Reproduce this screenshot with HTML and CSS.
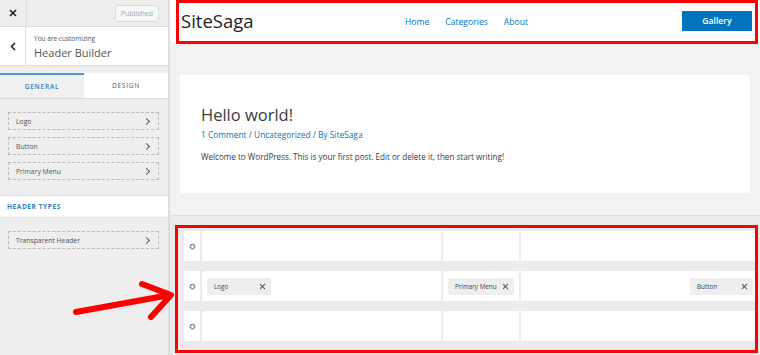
FILE: index.html
```html
<!DOCTYPE html>
<html lang="en">
<head>
  <title>Header Builder</title>
  <link rel="stylesheet" href="styles.css">
</head>
<body>
  <div id="app">
    <div class="sidebar">
      <div class="topbar">
        <div class="close">
          <svg width="8" height="8" viewBox="0 0 8 8"><path d="M1 1L7 7M7 1L1 7" stroke="#222" stroke-width="1.6"/></svg>
        </div>
        <div class="published">Published</div>
      </div>

      <div class="customizing">
        <div class="back">
          <svg width="6" height="9" viewBox="0 0 6 9"><path d="M5 1L1.5 4.5L5 8" fill="none" stroke="#222" stroke-width="1.6"/></svg>
        </div>
        <div class="title-wrap">
          <div class="small-title">You are customizing</div>
          <div class="big-title">Header Builder</div>
        </div>
      </div>

      <div class="tabs">
        <div class="tab active">General</div>
        <div class="tab">Design</div>
      </div>

      <div class="items">
        <div class="item">Logo <span class="chev"></span></div>
        <div class="item">Button <span class="chev"></span></div>
        <div class="item">Primary Menu <span class="chev"></span></div>
      </div>

      <div class="section-title">Header Types</div>

      <div class="items">
        <div class="item">Transparent Header <span class="chev"></span></div>
      </div>
    </div>

    <div class="preview">
      <div class="site-header">
        <div class="site-title">SiteSaga</div>
        <nav class="site-nav">
          <a>Home</a>
          <a>Categories</a>
          <a>About</a>
        </nav>
        <div class="gallery-btn">Gallery</div>
      </div>

      <div class="main">
        <div class="post">
          <h1>Hello world!</h1>
          <div class="meta">1 Comment / Uncategorized / By SiteSaga</div>
          <p>Welcome to WordPress. This is your first post. Edit or delete it, then start writing!</p>
        </div>
      </div>

      <div class="builder">
        <div class="row">
          <div class="gear"><span class="cog"></span></div>
          <div class="cell"></div>
          <div class="cell"></div>
          <div class="cell"></div>
        </div>
        <div class="row">
          <div class="gear"><span class="cog"></span></div>
          <div class="cell"><div class="chip">Logo <span class="x"></span></div></div>
          <div class="cell"><div class="chip">Primary Menu <span class="x"></span></div></div>
          <div class="cell right"><div class="chip">Button <span class="x"></span></div></div>
        </div>
        <div class="row">
          <div class="gear"><span class="cog"></span></div>
          <div class="cell"></div>
          <div class="cell"></div>
          <div class="cell"></div>
        </div>
      </div>
    </div>

    <!-- annotations -->
    <div class="mark mark-header"></div>
    <div class="mark mark-builder"></div>
    <svg class="arrow" width="120" height="50" viewBox="0 0 120 50">
      <path d="M4 40L98 23M70 12L99 23L79 45" fill="none" stroke="#ff0000" stroke-width="6" stroke-linecap="round" stroke-linejoin="round"/>
    </svg>
  </div>
</body>
</html>
```

FILE: styles.css
```css
body,
html {
  margin: 0;
  padding: 0;
  height: 100%;
  font-family: "Open Sans", Arial, sans-serif;
  color: #444;
}

#app {
  position: relative;
  display: flex;
  height: 355px;
  overflow: hidden;
}

/* Sidebar */

.sidebar {
  width: 168px;
  flex: none;
  background-color: #eeeeee;
  border-right: 2px solid #dddddd;
}

.topbar {
  display: flex;
  align-items: center;
  justify-content: space-between;
  height: 26px;
  border-bottom: 1px solid #dddddd;
}

.close {
  width: 26px;
  height: 26px;
  display: flex;
  align-items: center;
  justify-content: center;
  border-right: 1px solid #dddddd;
}

.published {
  margin-right: 9px;
  padding: 0 5px;
  height: 15px;
  line-height: 15px;
  font-size: 7px;
  color: #a7aaad;
  background-color: #f6f7f7;
  border: 1px solid #dcdcde;
  border-radius: 2px;
}

.customizing {
  display: flex;
  height: 38px;
  background-color: #ffffff;
  border-bottom: 1px solid #dddddd;
}

.back {
  width: 25px;
  display: flex;
  align-items: center;
  justify-content: center;
  border-right: 1px solid #dddddd;
}

.title-wrap {
  padding: 7px 0 0 8px;
}

.small-title {
  font-size: 6.5px;
  color: #555;
  line-height: 9px;
}

.big-title {
  font-size: 11px;
  color: #555;
  line-height: 16px;
  margin-top: 2px;
}

.tabs {
  display: flex;
  margin-top: 7px;
  height: 25px;
  border-bottom: 1px solid #dddddd;
}

.tab {
  flex: 1;
  display: flex;
  align-items: center;
  justify-content: center;
  font-size: 6.5px;
  letter-spacing: 0.8px;
  text-transform: uppercase;
  color: #555;
  background-color: #ffffff;
}

.tab.active {
  flex: none;
  width: 84px;
  color: #2e80c4;
  font-weight: 600;
  background-color: #f0f0f0;
  border-top: 2px solid #4f94d4;
  box-sizing: border-box;
}

.items {
  padding: 13px 9px 15px 8px;
  display: flex;
  flex-direction: column;
  gap: 7px;
}

.item {
  display: flex;
  align-items: center;
  justify-content: space-between;
  height: 16px;
  padding: 0 7px 0 7px;
  font-size: 6.8px;
  color: #555;
  border: 1px dashed #bbbbbb;
}

.chev {
  width: 4px;
  height: 4px;
  border-top: 1.4px solid #555d66;
  border-right: 1.4px solid #555d66;
  transform: rotate(45deg);
  margin-right: 2px;
}

.section-title {
  height: 21px;
  line-height: 21px;
  padding-left: 7px;
  background-color: #ffffff;
  border-top: 1px solid #e2e2e2;
  border-bottom: 1px solid #e2e2e2;
  font-size: 6.5px;
  font-weight: 700;
  letter-spacing: 0.6px;
  text-transform: uppercase;
  color: #2e80c4;
}

/* Preview */

.preview {
  flex: 1;
  display: flex;
  flex-direction: column;
  background-color: #f2f2f2;
}

.site-header {
  display: flex;
  align-items: center;
  height: 42px;
  padding: 0 8px 0 11px;
  background-color: #ffffff;
}

.site-title {
  font-size: 18.5px;
  color: #222;
  width: 224px;
  padding-bottom: 1px;
}

.site-nav {
  flex: 1;
  display: flex;
  gap: 16px;
  font-size: 8.6px;
  padding-top: 1px;
}

.site-nav a {
  color: #0274be;
}

.gallery-btn {
  width: 70px;
  height: 20px;
  line-height: 20px;
  text-align: center;
  font-size: 8.6px;
  font-weight: 600;
  color: #ffffff;
  background-color: #0274be;
  margin-top: -1px;
}

.main {
  padding: 33px 10px 22px 10px;
  border-bottom: 1px solid #dcdcdc;
}

.post {
  height: 118px;
  box-sizing: border-box;
  padding: 29px 21px 0 21px;
  background-color: #ffffff;
}

.post h1 {
  margin: 0;
  font-size: 16.5px;
  font-weight: 400;
  line-height: 22px;
  color: #3a3a3a;
}

.meta {
  margin-top: 3px;
  font-size: 8.4px;
  color: #0274be;
}

.post p {
  margin: 11px 0 0;
  font-size: 8.1px;
  color: #3a3a3a;
}

/* Builder */

.builder {
  flex: 1;
  padding: 15px 5px 0 14px;
  display: flex;
  flex-direction: column;
  gap: 10px;
  background-color: #ebebeb;
}

.row {
  display: grid;
  grid-template-columns: 16px 239px 76px 1fr;
  column-gap: 2px;
  height: 30px;
}

.gear,
.cell {
  background-color: #ffffff;
  display: flex;
  align-items: center;
}

.gear {
  justify-content: center;
}

.cog {
  width: 3px;
  height: 3px;
  border: 1.3px solid #777;
  border-radius: 50%;
  box-shadow: 0 0 0 0.6px #aaa;
}

.cell {
  padding: 0 5px;
}

.cell.right {
  justify-content: flex-end;
  padding-right: 2px;
}

.chip {
  display: flex;
  align-items: center;
  justify-content: space-between;
  height: 17px;
  padding: 0 5px 0 7px;
  font-size: 6.3px;
  color: #444;
  background-color: #eeeeee;
  border-radius: 2px;
}

.cell:nth-child(2) .chip {
  width: 64px;
  box-sizing: border-box;
}

.cell:nth-child(3) .chip {
  width: 70px;
  box-sizing: border-box;
}

.cell.right .chip {
  width: 63px;
  box-sizing: border-box;
}

.x {
  position: relative;
  width: 7px;
  height: 7px;
}

.x::before,
.x::after {
  content: "";
  position: absolute;
  left: 3px;
  top: 0;
  width: 1.3px;
  height: 7px;
  background-color: #555;
  transform: rotate(45deg);
}

.x::after {
  transform: rotate(-45deg);
}

/* Red annotations drawn over the screenshot */

.mark {
  position: absolute;
  border: 3px solid #ff0000;
  box-sizing: border-box;
}

.mark-header {
  left: 176px;
  top: 0;
  width: 582px;
  height: 44px;
}

.mark-builder {
  left: 175px;
  top: 225px;
  width: 583px;
  height: 128px;
}

.arrow {
  position: absolute;
  left: 72px;
  top: 272px;
}
```
